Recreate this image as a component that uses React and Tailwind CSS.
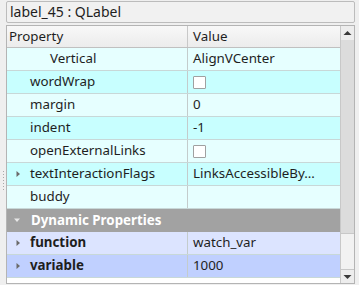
const ROWS = [
  { name: 'Vertical', value: 'AlignVCenter', bg: 'bg-[#e6ffff]', indent: 'pl-[43px]' },
  { name: 'wordWrap', check: true, bg: 'bg-[#c8ffff]' },
  { name: 'margin', value: '0', bg: 'bg-[#e6ffff]' },
  { name: 'indent', value: '-1', bg: 'bg-[#c8ffff]' },
  { name: 'openExternalLinks', check: true, bg: 'bg-[#e6ffff]' },
  { name: 'textInteractionFlags', value: 'LinksAccessibleBy…', bg: 'bg-[#c8ffff]', branch: true },
  { name: 'buddy', value: '', bg: 'bg-[#e6ffff]' },
];

const DYNAMIC = [
  { name: 'function', value: 'watch_var', bg: 'bg-[#dce4ff]' },
  { name: 'variable', value: '1000', bg: 'bg-[#c0d0ff]' },
];

/* ── small branch triangle ── */
const Arrow = ({ down, color = '#6b6b6b' }) =>
  down ? (
    <svg width="8" height="8" viewBox="0 0 8 8">
      <path d="M1 2.5 L7 2.5 L4 6 Z" fill={color} />
    </svg>
  ) : (
    <svg width="8" height="8" viewBox="0 0 8 8">
      <path d="M2.5 1 L6 4 L2.5 7 Z" fill={color} />
    </svg>
  );

const Check = () => <div className="w-[13px] h-[13px] bg-white border border-[#a0a0a0] rounded-[1px]" />;

const Row = ({ row, bold }) => (
  <div className={`flex h-[23px] border-b border-[#c8d8d8] ${row.bg}`}>
    <div className="w-[181px] flex items-center border-r border-[#c4cccc] relative">
      {row.branch && (
        <span className="absolute left-[7px] top-[7px]">
          <Arrow />
        </span>
      )}
      <span className={`${row.indent || 'pl-[23px]'} ${bold ? 'font-bold' : ''} whitespace-nowrap`}>
        {row.name}
      </span>
    </div>
    <div className="flex-1 flex items-center pl-[5px] whitespace-nowrap">
      {row.check ? <Check /> : row.value}
    </div>
  </div>
);

export default function App() {
  return (
    <div
      className="w-[359px] h-[285px] bg-[#efefef] flex text-[13.33px] text-[#1e1e1e] overflow-hidden"
      style={{ fontFamily: '"Noto Sans", "DejaVu Sans", sans-serif' }}
    >
      {/* splitter handle */}
      <div className="w-[6px] flex flex-col items-center justify-end pb-[95px] gap-[2px]">
        {[0, 1, 2, 3, 4, 5, 6].map((i) => (
          <div key={i} className="w-[1px] h-[1px] bg-[#a8a8a8]" />
        ))}
      </div>

      <div className="w-[349px] flex flex-col pt-[1px]">
        {/* object name line */}
        <div className="h-[22px] border border-[#bcbcbc] bg-[#f1f1f1] rounded-[2px] flex items-center px-[3px] leading-none text-[14px]">
          label_45 : QLabel
        </div>

        {/* property tree */}
        <div className="mt-[2px] h-[259px] border border-[#b4b4b4] bg-white flex">
          <div className="flex-1 flex flex-col overflow-hidden">
            <div className="flex h-[22px] bg-gradient-to-b from-[#f8f8f8] to-[#ececec] border-b border-[#c0c0c0]">
              <div className="w-[181px] flex items-center pl-[2px] border-r border-[#c8c8c8]">Property</div>
              <div className="flex-1 flex items-center pl-[5px]">Value</div>
            </div>

            {ROWS.map((r) => (
              <Row key={r.name} row={r} />
            ))}

            <div className="flex items-center h-[23px] bg-[#a2a2a2] text-white font-bold relative">
              <span className="absolute left-[6px] top-[7px]">
                <Arrow down color="#e8e8e8" />
              </span>
              <span className="pl-[24px]">Dynamic Properties</span>
            </div>

            {DYNAMIC.map((r) => (
              <Row key={r.name} row={{ ...r, branch: true }} bold />
            ))}
          </div>

          {/* scrollbar */}
          <div className="w-[14px] border-l border-[#c8c8c8] bg-[#dcdcdc] flex flex-col">
            <div className="h-[14px] bg-[#ededed] flex items-center justify-center">
              <svg width="9" height="6" viewBox="0 0 9 6">
                <path d="M0.5 5 L4.5 1 L8.5 5 Z" fill="#3a3a3a" />
              </svg>
            </div>
            <div className="flex-1" />
            <div className="h-[36px] bg-[#f2f2f2] border-t border-[#c8c8c8]" />
            <div className="h-[14px] bg-[#ededed] border-t border-[#c8c8c8] flex items-center justify-center">
              <svg width="9" height="6" viewBox="0 0 9 6">
                <path d="M0.5 1 L4.5 5 L8.5 1 Z" fill="#3a3a3a" />
              </svg>
            </div>
          </div>
        </div>
      </div>
    </div>
  );
}
